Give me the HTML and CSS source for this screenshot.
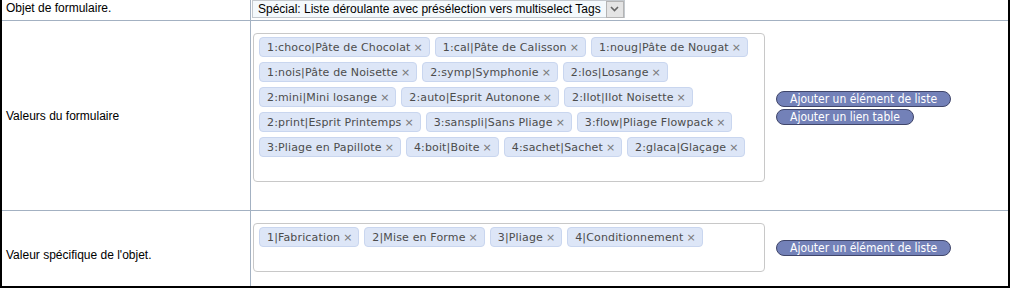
FILE: index.html
```html
<!DOCTYPE html>
<html>
<head>
    <meta charset="UTF-8" />
    <title>Objet de formulaire</title>
    <link rel="stylesheet" href="styles.css">
</head>
<body>
    <table class="form-table">
        <colgroup>
            <col class="col-label">
            <col class="col-field">
        </colgroup>
        <tr class="row-type">
            <td class="label">Objet de formulaire.</td>
            <td class="field-top">
                <div class="select">
                    <span class="select-text">Spécial: Liste déroulante avec présélection vers multiselect Tags</span>
                    <span class="select-arrow">
                        <svg width="9" height="6" viewBox="0 0 9 6"><path d="M1 1 L4.5 4.5 L8 1" fill="none" stroke="#666" stroke-width="1.6"/></svg>
                    </span>
                </div>
            </td>
        </tr>
        <tr class="row-values">
            <td class="label">Valeurs du formulaire</td>
            <td class="field">
                <div class="field-inner">
                    <div class="tag-box">
                        <span class="tag">1:choco|Pâte de Chocolat<span class="x">×</span></span>
                        <span class="tag">1:cal|Pâte de Calisson<span class="x">×</span></span>
                        <span class="tag">1:noug|Pâte de Nougat<span class="x">×</span></span>
                        <span class="tag">1:nois|Pâte de Noisette<span class="x">×</span></span>
                        <span class="tag">2:symp|Symphonie<span class="x">×</span></span>
                        <span class="tag">2:los|Losange<span class="x">×</span></span>
                        <span class="tag">2:mini|Mini losange<span class="x">×</span></span>
                        <span class="tag">2:auto|Esprit Autonone<span class="x">×</span></span>
                        <span class="tag">2:Ilot|Ilot Noisette<span class="x">×</span></span>
                        <span class="tag">2:print|Esprit Printemps<span class="x">×</span></span>
                        <span class="tag">3:sanspli|Sans Pliage<span class="x">×</span></span>
                        <span class="tag">3:flow|Pliage Flowpack<span class="x">×</span></span>
                        <span class="tag">3:Pliage en Papillote<span class="x">×</span></span>
                        <span class="tag">4:boit|Boite<span class="x">×</span></span>
                        <span class="tag">4:sachet|Sachet<span class="x">×</span></span>
                        <span class="tag">2:glaca|Glaçage<span class="x">×</span></span>
                        <div class="tag-input"></div>
                    </div>
                    <div class="buttons">
                        <button class="btn">Ajouter un élément de liste</button>
                        <button class="btn">Ajouter un lien table</button>
                    </div>
                </div>
            </td>
        </tr>
        <tr class="row-specific">
            <td class="label label-low">Valeur spécifique de l'objet.</td>
            <td class="field">
                <div class="field-inner">
                    <div class="tag-box">
                        <span class="tag">1|Fabrication<span class="x">×</span></span>
                        <span class="tag">2|Mise en Forme<span class="x">×</span></span>
                        <span class="tag">3|Pliage<span class="x">×</span></span>
                        <span class="tag">4|Conditionnement<span class="x">×</span></span>
                        <div class="tag-input"></div>
                    </div>
                    <div class="buttons">
                        <button class="btn">Ajouter un élément de liste</button>
                    </div>
                </div>
            </td>
        </tr>
    </table>
</body>
</html>
```

FILE: styles.css
```css
* {
    margin: 0;
    padding: 0;
    box-sizing: border-box;
}
body {
    font-family: "Liberation Sans", Arial, sans-serif;
    font-size: 12px;
    background-color: white;
    color: black;
}
.form-table {
    width: 1010px;
    table-layout: fixed;
    border-collapse: separate;
    border-spacing: 0;
    border-left: 2px solid black;
    border-right: 2px solid black;
    border-bottom: 2px solid black;
}
.col-label {
    width: 249px;
}
td {
    border-bottom: 1px solid #a3b1c2;
}
tr:last-child td {
    border-bottom: none;
}
.label {
    border-right: 1px solid #a3b1c2;
    padding-left: 4px;
    vertical-align: middle;
}
.label-low {
    padding-top: 12px;
}
.row-type td {
    height: 21px;
    vertical-align: top;
}
.row-type .label {
    padding-top: 1px;
}
.row-values td {
    height: 190px;
}
.row-specific td {
    height: 75px;
}
.field-top {
    padding-left: 1px;
}
.select {
    display: inline-flex;
    align-items: center;
    height: 18px;
    border: 1px solid #c4c9ce;
    background-color: #f4f9fc;
    padding-left: 5px;
}
.select-text {
    line-height: 16px;
}
.select-arrow {
    display: flex;
    align-items: center;
    justify-content: center;
    width: 18px;
    height: 17px;
    margin-left: 5px;
    border: 1px solid #b4b4b4;
    background-color: #e4e4e4;
}
.field {
    vertical-align: top;
    padding: 12px 0 0 2px;
}
.field-inner {
    display: flex;
    align-items: center;
    gap: 11px;
}
.tag-box {
    width: 512px;
    border: 1px solid #c8c8c8;
    border-radius: 4px;
    padding: 3px 0 0 5px;
    display: flex;
    flex-wrap: wrap;
    align-items: flex-start;
}
.tag {
    display: inline-flex;
    align-items: center;
    height: 20px;
    margin: 0 5px 5px 0;
    padding: 0 6px 0 7px;
    border: 1px solid #c9d6ef;
    border-radius: 4px;
    background-color: #dde6f7;
    color: #4c4c4c;
    font-family: "DejaVu Sans", Verdana, sans-serif;
    font-size: 11px;
    letter-spacing: 0.15px;
    white-space: nowrap;
}
.x {
    margin-left: 3px;
    color: #777;
    font-size: 11px;
    letter-spacing: 0;
}
.tag-input {
    flex-basis: 100%;
    height: 19px;
}
.buttons {
    display: flex;
    flex-direction: column;
    align-items: flex-start;
    gap: 2px;
}
.btn {
    height: 16px;
    padding: 0 13px;
    border: 1px solid #40466a;
    border-radius: 8px;
    background-color: #7381b8;
    color: white;
    font-family: "DejaVu Sans Condensed", "DejaVu Sans", Tahoma, sans-serif;
    font-size: 12px;
    line-height: 14px;
}
```
